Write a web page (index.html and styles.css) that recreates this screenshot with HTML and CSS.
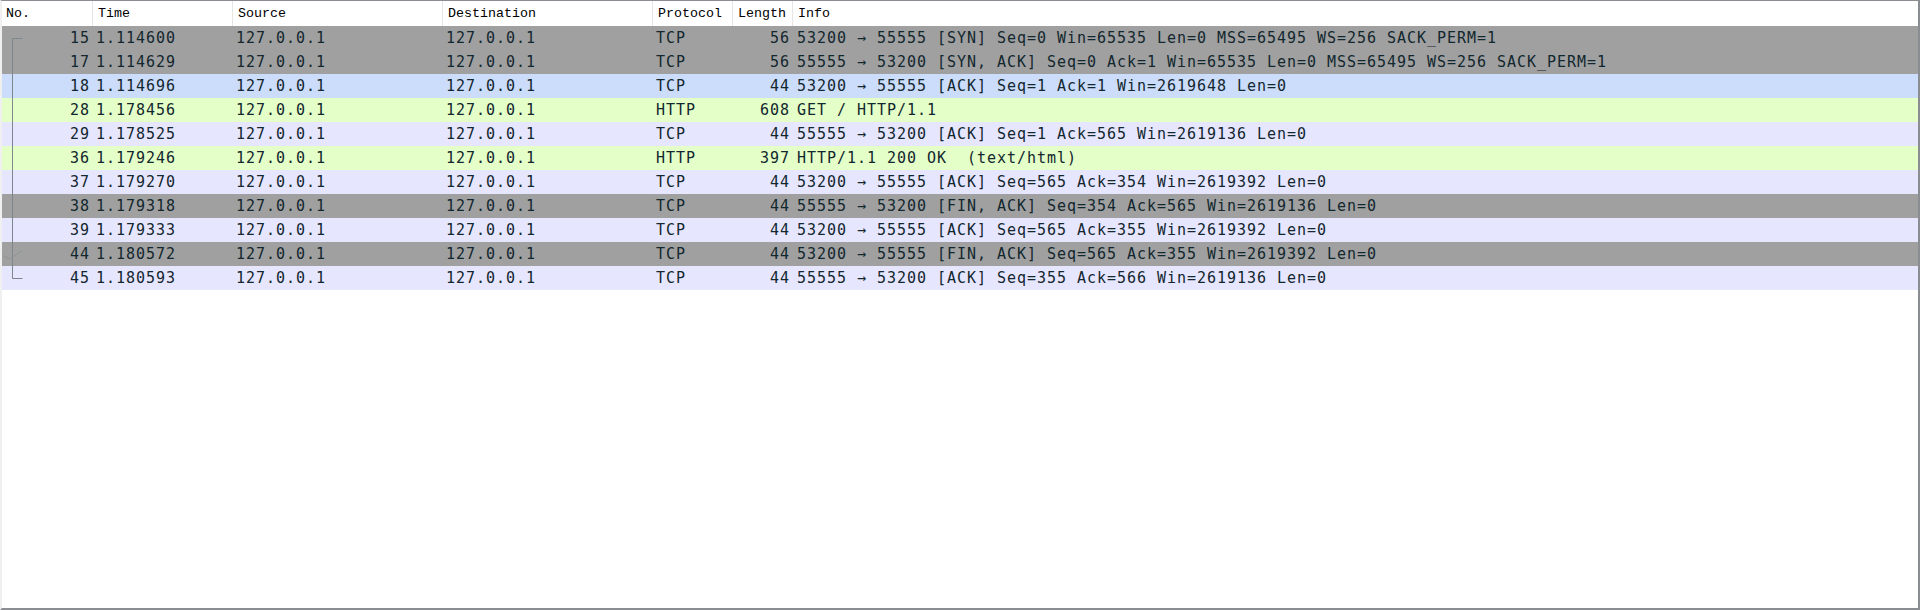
FILE: index.html
```html
<!DOCTYPE html>
<html>
<head>
<meta charset="utf-8">
<link rel="stylesheet" href="styles.css">
</head>
<body>
<div class="frame">
  <div class="list">
    <div class="hdr">
      <div class="hc first">No.</div>
      <div class="hc">Time</div>
      <div class="hc">Source</div>
      <div class="hc">Destination</div>
      <div class="hc">Protocol</div>
      <div class="hc">Length</div>
      <div class="hc">Info</div>
    </div>

    <div class="row gray">
      <div class="c no"><svg class="rel" width="24" height="24" viewBox="0 0 24 24"><path d="M10.5 24V12.5H20.5" fill="none" stroke="#7d878c" stroke-width="1"/></svg><span>15</span></div>
      <div class="c">1.114600</div><div class="c">127.0.0.1</div><div class="c">127.0.0.1</div><div class="c">TCP</div><div class="c r">56</div>
      <div class="c info">53200 → 55555 [SYN] Seq=0 Win=65535 Len=0 MSS=65495 WS=256 SACK_PERM=1</div>
    </div>
    <div class="row gray">
      <div class="c no"><svg class="rel" width="24" height="24" viewBox="0 0 24 24"><path d="M10.5 0V24" fill="none" stroke="#7d878c" stroke-width="1"/></svg><span>17</span></div>
      <div class="c">1.114629</div><div class="c">127.0.0.1</div><div class="c">127.0.0.1</div><div class="c">TCP</div><div class="c r">56</div>
      <div class="c info">55555 → 53200 [SYN, ACK] Seq=0 Ack=1 Win=65535 Len=0 MSS=65495 WS=256 SACK_PERM=1</div>
    </div>
    <div class="row blue">
      <div class="c no"><svg class="rel" width="24" height="24" viewBox="0 0 24 24"><path d="M10.5 0V24" fill="none" stroke="#7d878c" stroke-width="1"/></svg><span>18</span></div>
      <div class="c">1.114696</div><div class="c">127.0.0.1</div><div class="c">127.0.0.1</div><div class="c">TCP</div><div class="c r">44</div>
      <div class="c info">53200 → 55555 [ACK] Seq=1 Ack=1 Win=2619648 Len=0</div>
    </div>
    <div class="row green">
      <div class="c no"><svg class="rel" width="24" height="24" viewBox="0 0 24 24"><path d="M10.5 0V24" fill="none" stroke="#7d878c" stroke-width="1"/></svg><span>28</span></div>
      <div class="c">1.178456</div><div class="c">127.0.0.1</div><div class="c">127.0.0.1</div><div class="c">HTTP</div><div class="c r">608</div>
      <div class="c info">GET / HTTP/1.1</div>
    </div>
    <div class="row lav">
      <div class="c no"><svg class="rel" width="24" height="24" viewBox="0 0 24 24"><path d="M10.5 0V24" fill="none" stroke="#7d878c" stroke-width="1"/></svg><span>29</span></div>
      <div class="c">1.178525</div><div class="c">127.0.0.1</div><div class="c">127.0.0.1</div><div class="c">TCP</div><div class="c r">44</div>
      <div class="c info">55555 → 53200 [ACK] Seq=1 Ack=565 Win=2619136 Len=0</div>
    </div>
    <div class="row green">
      <div class="c no"><svg class="rel" width="24" height="24" viewBox="0 0 24 24"><path d="M10.5 0V24" fill="none" stroke="#7d878c" stroke-width="1"/></svg><span>36</span></div>
      <div class="c">1.179246</div><div class="c">127.0.0.1</div><div class="c">127.0.0.1</div><div class="c">HTTP</div><div class="c r">397</div>
      <div class="c info">HTTP/1.1 200 OK  (text/html)</div>
    </div>
    <div class="row lav">
      <div class="c no"><svg class="rel" width="24" height="24" viewBox="0 0 24 24"><path d="M10.5 0V24" fill="none" stroke="#7d878c" stroke-width="1"/></svg><span>37</span></div>
      <div class="c">1.179270</div><div class="c">127.0.0.1</div><div class="c">127.0.0.1</div><div class="c">TCP</div><div class="c r">44</div>
      <div class="c info">53200 → 55555 [ACK] Seq=565 Ack=354 Win=2619392 Len=0</div>
    </div>
    <div class="row gray">
      <div class="c no"><svg class="rel" width="24" height="24" viewBox="0 0 24 24"><path d="M10.5 0V24" fill="none" stroke="#7d878c" stroke-width="1"/></svg><span>38</span></div>
      <div class="c">1.179318</div><div class="c">127.0.0.1</div><div class="c">127.0.0.1</div><div class="c">TCP</div><div class="c r">44</div>
      <div class="c info">55555 → 53200 [FIN, ACK] Seq=354 Ack=565 Win=2619136 Len=0</div>
    </div>
    <div class="row lav">
      <div class="c no"><svg class="rel" width="24" height="24" viewBox="0 0 24 24"><path d="M10.5 0V24" fill="none" stroke="#7d878c" stroke-width="1"/></svg><span>39</span></div>
      <div class="c">1.179333</div><div class="c">127.0.0.1</div><div class="c">127.0.0.1</div><div class="c">TCP</div><div class="c r">44</div>
      <div class="c info">53200 → 55555 [ACK] Seq=565 Ack=355 Win=2619392 Len=0</div>
    </div>
    <div class="row gray">
      <div class="c no"><svg class="rel" width="24" height="24" viewBox="0 0 24 24"><path d="M10.5 0V24" fill="none" stroke="#7d878c" stroke-width="1"/><path d="M1 13.5L7.5 17L20.5 8.5" fill="none" stroke="#8c9498" stroke-width="1"/></svg><span>44</span></div>
      <div class="c">1.180572</div><div class="c">127.0.0.1</div><div class="c">127.0.0.1</div><div class="c">TCP</div><div class="c r">44</div>
      <div class="c info">53200 → 55555 [FIN, ACK] Seq=565 Ack=355 Win=2619392 Len=0</div>
    </div>
    <div class="row lav">
      <div class="c no"><svg class="rel" width="24" height="24" viewBox="0 0 24 24"><path d="M10.5 0V12.5H20.5" fill="none" stroke="#7d878c" stroke-width="1"/></svg><span>45</span></div>
      <div class="c">1.180593</div><div class="c">127.0.0.1</div><div class="c">127.0.0.1</div><div class="c">TCP</div><div class="c r">44</div>
      <div class="c info">55555 → 53200 [ACK] Seq=355 Ack=566 Win=2619136 Len=0</div>
    </div>
  </div>
</div>
</body>
</html>
```

FILE: styles.css
```css
html, body {
  margin: 0;
  padding: 0;
  background: #ffffff;
}

.frame {
  box-sizing: border-box;
  width: 1920px;
  height: 610px;
  border-top: 1px solid #8a8d92;
  border-right: 2px solid #8a8d92;
  border-bottom: 2px solid #8a8d92;
  border-left: 2px solid #f0f0f0;
  background: #ffffff;
  overflow: hidden;
}

.list {
  display: flex;
  flex-direction: column;
}

.hdr,
.row {
  display: grid;
  grid-template-columns: 90px 140px 210px 210px 80px 60px 1fr;
}

.hdr {
  height: 25px;
  background: #ffffff;
}

.hc {
  display: flex;
  align-items: center;
  padding: 0 0 1px 5px;
  border-left: 1px solid #e5e5e5;
  font-family: "Liberation Mono", monospace;
  font-size: 13.33px;
  color: #000000;
  white-space: nowrap;
}

.hc.first {
  border-left: none;
  padding-left: 4px;
}

.row {
  height: 24px;
  font-family: "DejaVu Sans Mono", monospace;
  font-size: 15px;
  letter-spacing: 0.97px;
  color: #12272e;
}

.gray { background: #a0a0a0; }
.blue { background: #ccdcfb; }
.green { background: #e4ffc7; }
.lav { background: #e7e6ff; }

.c {
  display: flex;
  align-items: center;
  padding: 0 4px;
  white-space: pre;
  overflow: hidden;
}

.c.r {
  justify-content: flex-end;
  padding-right: 2px;
}

.c.no {
  position: relative;
  justify-content: flex-end;
  padding-right: 2px;
}

.rel {
  position: absolute;
  left: 0;
  top: 0;
}

.c.info {
  padding-left: 5px;
}
```
